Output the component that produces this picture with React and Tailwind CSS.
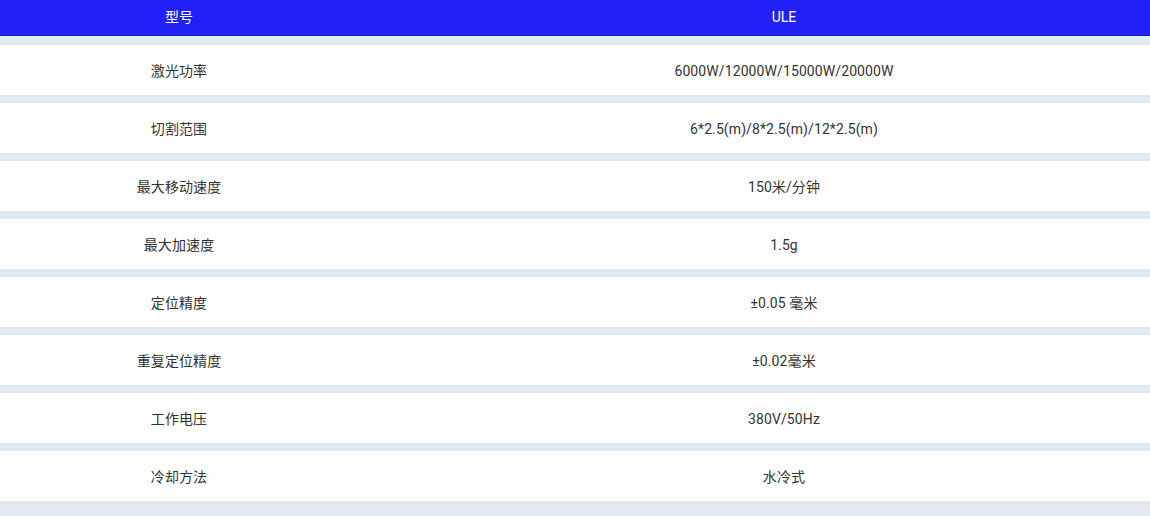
const specs = [
  ['激光功率', '6000W/12000W/15000W/20000W'],
  ['切割范围', '6*2.5(m)/8*2.5(m)/12*2.5(m)'],
  ['最大移动速度', '150米/分钟'],
  ['最大加速度', '1.5g'],
  ['定位精度', '±0.05 毫米'],
  ['重复定位精度', '±0.02毫米'],
  ['工作电压', '380V/50Hz'],
  ['冷却方法', '水冷式'],
];

const font = { fontFamily: 'Roboto, "Noto Sans CJK SC", sans-serif' };

export default function App() {
  return (
    <div className="w-[1150px] h-[516px] overflow-hidden bg-[#e3e9f0]" style={font}>
      <div className="w-[1210px]">
        {/* header */}
        <div className="grid grid-cols-[358px_852px] h-[36px] bg-[#1f21f6] border-b border-[#1313c4] text-white text-[14px] items-center">
          <div className="text-center">型号</div>
          <div className="text-center">ULE</div>
        </div>
        <div className="h-px bg-[#f1f4f8]" />

        {specs.map(([label, value]) => (
          <div key={label} className="pt-[8px]">
            <div className="grid grid-cols-[358px_852px] h-[50px] pt-[2px] bg-white items-center text-[14px] tracking-[0.1px] text-[#333]">
              <div className="text-center">{label}</div>
              <div className="text-center">{value}</div>
            </div>
          </div>
        ))}
      </div>
    </div>
  );
}
